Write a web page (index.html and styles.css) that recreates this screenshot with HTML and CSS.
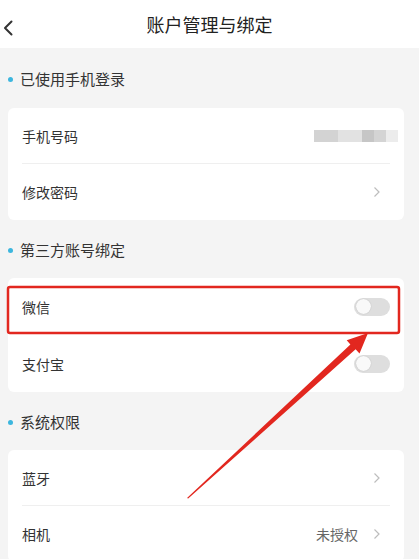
FILE: index.html
```html
<!DOCTYPE html>
<html lang="zh-CN">
<head>
    <meta charset="UTF-8">
    <meta name="viewport" content="width=device-width, initial-scale=1.0">
    <title>账户管理与绑定</title>
    <link rel="stylesheet" href="styles.css">
</head>
<body>
    <header class="topbar">
        <span class="back" aria-label="返回">
            <svg viewBox="0 0 10 16"><polyline points="8.5,1.5 2,8 8.5,14.5"/></svg>
        </span>
        <h1 class="title">账户管理与绑定</h1>
    </header>

    <main class="page">
        <div class="section-title first">已使用手机登录</div>
        <div class="card">
            <div class="row">
                <span class="label">手机号码</span>
                <span class="masked"><i></i><i></i><i></i><i></i><i></i></span>
            </div>
            <div class="divider"></div>
            <div class="row">
                <span class="label">修改密码</span>
                <svg class="chevron" viewBox="0 0 8 12"><polyline points="1.5,1.5 6,6 1.5,10.5"/></svg>
            </div>
        </div>

        <div class="section-title">第三方账号绑定</div>
        <div class="card">
            <div class="row tall">
                <span class="label">微信</span>
                <span class="switch"><span class="knob"></span></span>
            </div>
            <div class="row tall">
                <span class="label">支付宝</span>
                <span class="switch"><span class="knob"></span></span>
            </div>
        </div>

        <div class="section-title">系统权限</div>
        <div class="card">
            <div class="row">
                <span class="label">蓝牙</span>
                <svg class="chevron" viewBox="0 0 8 12"><polyline points="1.5,1.5 6,6 1.5,10.5"/></svg>
            </div>
            <div class="divider"></div>
            <div class="row">
                <span class="label">相机</span>
                <span class="value">未授权</span>
                <svg class="chevron" viewBox="0 0 8 12"><polyline points="1.5,1.5 6,6 1.5,10.5"/></svg>
            </div>
        </div>
    </main>

    <!-- annotation drawn over the screenshot -->
    <svg class="annotation" viewBox="0 0 419 559">
        <rect class="mark-box" x="8" y="287" width="391" height="46" rx="2"/>
        <polygon class="mark-arrow" points="187,498 350.4,344.4 346.7,340.2 368,333 359.5,353.4 355.6,349.3 188.2,498.6"/>
    </svg>
</body>
</html>
```

FILE: styles.css
```css
:root {
    --page-bg: #f4f4f4;
    --card-bg: #ffffff;
    --text-color: #333;
    --title-color: #222;
    --muted: #666;
    --chevron: #bdbdbd;
    --divider: #efefef;
    --dot: #3cb6de;
    --switch-off: #dedede;
    --mark: #e2271f;
}

* {
    box-sizing: border-box;
}

body {
    margin: 0;
    background-color: var(--page-bg);
    color: var(--text-color);
    font-family: "Noto Sans CJK SC", "Noto Sans", sans-serif;
    overflow: hidden;
}

.topbar {
    height: 48px;
    background-color: var(--card-bg);
    display: flex;
    align-items: center;
    justify-content: center;
    position: relative;
}
.back {
    position: absolute;
    left: 3px;
    top: 17px;
    width: 10px;
    height: 16px;
}
.back svg {
    width: 10px;
    height: 16px;
    fill: none;
    stroke: #333;
    stroke-width: 2;
    stroke-linecap: round;
    stroke-linejoin: round;
}
.title {
    margin: 0;
    font-size: 18px;
    font-weight: 400;
    color: var(--title-color);
    line-height: 24px;
}

.page {
    display: flex;
    flex-direction: column;
}

.section-title {
    display: flex;
    align-items: center;
    gap: 7px;
    padding: 20px 0 18px 8px;
    font-size: 15px;
    line-height: 20px;
    color: var(--text-color);
}
.section-title::before {
    content: "";
    width: 5px;
    height: 5px;
    border-radius: 50%;
    background-color: var(--dot);
    margin-top: 1px;
}
.section-title.first {
    padding-top: 21px;
    padding-bottom: 19px;
}

.card {
    margin: 0 15px 0 8px;
    background-color: var(--card-bg);
    border-radius: 6px;
    display: flex;
    flex-direction: column;
}

.row {
    height: 56px;
    display: flex;
    align-items: center;
    padding: 0 14px;
    font-size: 14px;
}
.row:first-child {
    height: 55px;
}
.row.tall {
    height: 57px;
}
.label {
    flex: 1;
}
.value {
    color: var(--muted);
    font-size: 14px;
    margin-right: 15px;
}

.divider {
    height: 1px;
    margin: 0 14px;
    background-color: var(--divider);
}

.chevron {
    width: 8px;
    height: 12px;
    margin-right: 9px;
    fill: none;
    stroke: var(--chevron);
    stroke-width: 1.2;
}

.masked {
    display: flex;
    height: 12px;
    margin-right: -8px;
}
.masked i {
    display: block;
    height: 12px;
}
.masked i:nth-child(1) { width: 24px; background: #d3d3d3; }
.masked i:nth-child(2) { width: 24px; background: #e2e2e2; }
.masked i:nth-child(3) { width: 12px; background: #c6c6c6; }
.masked i:nth-child(4) { width: 12px; background: #d4d4d4; }
.masked i:nth-child(5) { width: 12px; background: #ececec; }

.switch {
    width: 36px;
    height: 18px;
    border-radius: 9px;
    background-color: var(--switch-off);
    display: flex;
    align-items: center;
    padding: 0 2px;
}
.knob {
    width: 15px;
    height: 15px;
    border-radius: 50%;
    background-color: #f9f9f9;
    box-shadow: 0 0 1px rgba(0,0,0,0.25);
}

.annotation {
    position: absolute;
    left: 0;
    top: 0;
    width: 419px;
    height: 559px;
    pointer-events: none;
}
.mark-box {
    fill: none;
    stroke: var(--mark);
    stroke-width: 2.5;
}
.mark-arrow {
    fill: var(--mark);
}
```
